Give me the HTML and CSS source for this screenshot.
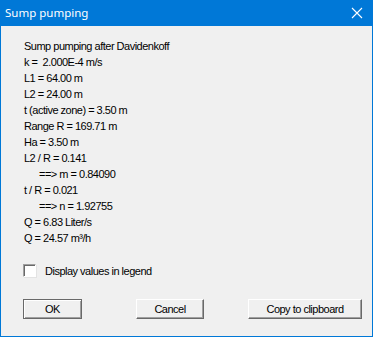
FILE: index.html
```html
<!DOCTYPE html>
<html>
<head>
  <link rel="stylesheet" href="styles.css">
</head>
<body>
  <div class="window">
    <!-- 标题栏 -->
    <div class="titlebar">
      <span class="title">Sump pumping</span>
      <svg class="close" width="12" height="12" viewBox="0 0 12 12">
        <path d="M1 1 L11 11 M11 1 L1 11" stroke="#fff" stroke-width="1.1" fill="none"/>
      </svg>
    </div>
    <!-- 计算结果 -->
    <div class="content">
      <div class="results">
        <div class="line">Sump pumping after Davidenkoff</div>
        <div class="line">k = &nbsp;2.000E-4 m/s</div>
        <div class="line">L1 = 64.00 m</div>
        <div class="line">L2 = 24.00 m</div>
        <div class="line">t (active zone) = 3.50 m</div>
        <div class="line">Range R = 169.71 m</div>
        <div class="line">Ha = 3.50 m</div>
        <div class="line">L2 / R = 0.141</div>
        <div class="line indent">==&gt; m = 0.84090</div>
        <div class="line">t / R = 0.021</div>
        <div class="line indent">==&gt; n = 1.92755</div>
        <div class="line">Q = 6.83 Liter/s</div>
        <div class="line">Q = 24.57 m³/h</div>
      </div>
      <label class="check">
        <span class="box"></span>
        <span>Display values in legend</span>
      </label>
      <div class="buttons">
        <button class="btn btn-ok">OK</button>
        <button class="btn btn-cancel">Cancel</button>
        <button class="btn btn-copy">Copy to clipboard</button>
      </div>
    </div>
  </div>
</body>
</html>
```

FILE: styles.css
```css
body {
  margin: 0;
  background: #ffffff;
}

/* 对话框窗口 */
.window {
  width: 373px;
  height: 337px;
  box-sizing: border-box;
  border: 1px solid #0078d7;
  border-top: none;
  background: #f0f0f0;
  display: flex;
  flex-direction: column;
  font-family: 'Liberation Sans', Arial, sans-serif;
  font-size: 11px;
  letter-spacing: -0.5px;
  color: #000;
}

/* 标题栏 */
.titlebar {
  height: 26px;
  margin: 0 -1px;
  background: #0078d7;
  color: #fff;
  display: flex;
  align-items: center;
  justify-content: space-between;
  padding: 0 10px 0 5px;
  font-family: 'Noto Sans', sans-serif;
  font-size: 11.5px;
  letter-spacing: 0;
}

.title {
  padding-bottom: 2px;
}

.close {
  margin-top: -1px;
}

.content {
  padding: 12px 0 0 22px;
}

.results {
  padding-left: 1px;
}

.line {
  height: 16px;
  line-height: 16px;
  white-space: pre;
}

.indent {
  padding-left: 15px;
}

/* 复选框 */
.check {
  display: flex;
  align-items: center;
  gap: 9px;
  margin-top: 18px;
  height: 13px;
}

.box {
  width: 11px;
  height: 11px;
  background: #fff;
  border: 1px solid;
  border-color: #a0a0a0 #fff #fff #a0a0a0;
  box-shadow: inset 1px 1px 0 #696969, 1px 1px 0 #e3e3e3;
}

/* 按钮 */
.buttons {
  display: flex;
  margin-top: 22px;
}

.btn {
  height: 20px;
  padding: 0;
  background: #f0f0f0;
  font-family: 'Liberation Sans', Arial, sans-serif;
  font-size: 11px;
  letter-spacing: -0.5px;
  color: #000;
  border: 1px solid;
  border-color: #fff #696969 #696969 #fff;
  box-shadow: inset -1px -1px 0 #a0a0a0;
}

.btn-ok {
  width: 59px;
  border-color: #696969;
  box-shadow: inset 1px 1px 0 #fff, inset -1px -1px 0 #a0a0a0;
}

.btn-cancel {
  width: 68px;
  margin-left: 54px;
}

.btn-copy {
  width: 114px;
  margin-left: 44px;
}
```
